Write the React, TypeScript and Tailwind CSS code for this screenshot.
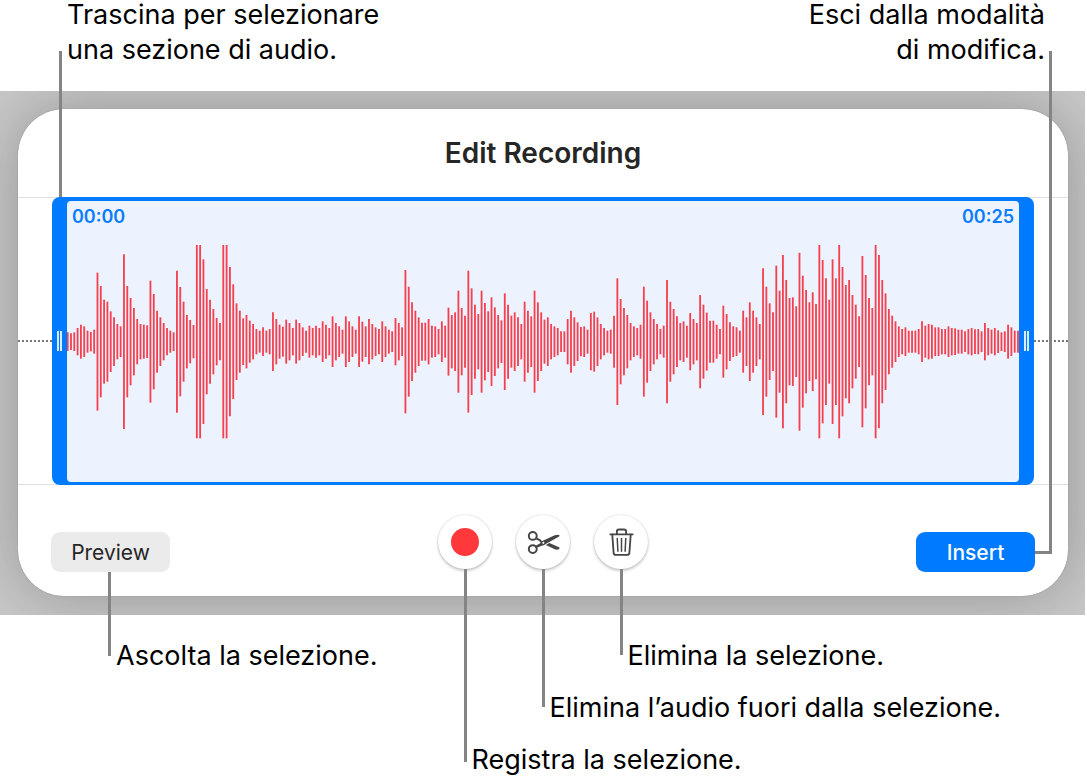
import React from 'react';

const LEVELS: number[] = [
  28, 25, 28, 41, 51, 46, 33, 29, 36, 207, 167, 126, 120, 91, 73, 53, 46, 262, 167, 131,
  101, 68, 53, 51, 49, 183, 143, 93, 73, 56, 41, 33, 28, 213, 164, 120, 80, 65, 50, 290,
  290, 247, 158, 126, 98, 71, 56, 290, 290, 224, 172, 115, 93, 70, 80, 63, 53, 38, 33, 43,
  33, 38, 88, 68, 51, 45, 66, 56, 41, 66, 56, 43, 33, 48, 41, 48, 41, 61, 51, 41,
  76, 56, 46, 36, 76, 61, 46, 36, 76, 60, 46, 68, 53, 43, 38, 61, 46, 36, 31, 71,
  56, 43, 215, 165, 118, 93, 73, 57, 57, 68, 48, 46, 38, 61, 48, 102, 80, 88, 153, 101,
  78, 213, 160, 111, 83, 153, 116, 91, 133, 103, 80, 64, 145, 111, 78, 88, 73, 53, 120, 93,
  76, 153, 118, 88, 66, 73, 53, 46, 41, 31, 31, 68, 93, 73, 58, 44, 46, 36, 86, 90,
  73, 53, 41, 33, 36, 78, 190, 128, 101, 80, 56, 46, 41, 51, 165, 123, 88, 68, 53, 38,
  48, 185, 120, 98, 76, 56, 61, 48, 86, 68, 56, 140, 111, 87, 63, 63, 51, 38, 108, 83,
  58, 46, 43, 33, 93, 73, 118, 93, 73, 53, 220, 165, 115, 88, 228, 153, 260, 185, 131, 133,
  106, 267, 198, 155, 118, 148, 113, 290, 245, 190, 126, 247, 190, 290, 224, 170, 185, 140, 111, 76,
  257, 200, 131, 101, 290, 260, 185, 145, 98, 78, 61, 46, 38, 43, 33, 33, 33, 38, 61, 48,
  53, 51, 43, 43, 38, 38, 46, 41, 40, 36, 36, 31, 38, 41, 37, 38, 31, 56, 41, 36,
  41, 34, 28, 31, 51, 43, 33, 33,
];

const STEP = 9.934;

function Waveform() {
  return (
    <svg
      viewBox="0 0 2856 582"
      preserveAspectRatio="none"
      className="block h-[194px] w-full"
      role="img"
      aria-label="Waveform"
    >
      <g stroke="#f5414f" strokeWidth="5.5">
        {LEVELS.map((level, i) => (
          <line key={i} x1={2 + i * STEP} x2={2 + i * STEP} y1={290 - level} y2={290 + level} />
        ))}
      </g>
    </svg>
  );
}

function Handle({ label }: { label: string }) {
  return (
    <button type="button" aria-label={label} className="flex w-[15px] shrink-0 items-center justify-center gap-px">
      <span className="h-5 w-0.5 bg-white/85" />
      <span className="h-5 w-0.5 bg-white/85" />
    </button>
  );
}

function ScissorsIcon() {
  return (
    <svg viewBox="0 0 100 75" className="h-[25px] w-[33px]" fill="#464646" aria-hidden="true">
      <g fill="none" stroke="#464646" strokeWidth="6" strokeLinecap="round">
        <circle cx="17.5" cy="17.5" r="12" />
        <circle cx="17.5" cy="57.5" r="12" />
        <path d="M28 25 L40 31" />
        <path d="M28 50 L42 42" />
      </g>
      <path
        fillRule="evenodd"
        d="M36 30 L46 33 L84 15.500 Q94 12 99 16 Q99 19 96 20 L58 41 Q53 46 45 47 L31 53 L29 47 L42 40 Z M49.500 35.500 a3 3 0 1 0 .1 0 Z"
      />
      <path d="M57 45 L68 39 L97 52 Q100 54 98 57 Q92 61 84 58 Z" />
    </svg>
  );
}

function TrashIcon() {
  return (
    <svg
      viewBox="0 0 76 84"
      className="h-7 w-[25px]"
      fill="none"
      stroke="#464646"
      strokeWidth="5.5"
      strokeLinecap="round"
      strokeLinejoin="round"
      aria-hidden="true"
    >
      <path d="M4 19 H72" />
      <path d="M24 18 V10 Q24 4 30 4 H46 Q52 4 52 10 V18" />
      <path d="M10 20 L14 75 Q14.500 81 20 81 H56 Q61.500 81 62 75 L66 20" />
      <path d="M25 31 L27 70 M38 31 V70 M51 31 L49 70" strokeWidth="4.500" />
    </svg>
  );
}

function RoundButton({
  label,
  lineClass,
  children,
}: {
  label: string;
  lineClass: string;
  children: React.ReactNode;
}) {
  return (
    <div className="relative">
      <button
        type="button"
        aria-label={label}
        className="flex size-[54px] items-center justify-center rounded-full bg-white shadow-[0_2px_3px_rgba(0,0,0,0.2),0_0_2px_rgba(0,0,0,0.2)]"
      >
        {children}
      </button>
      <span className={`absolute left-[26px] top-full z-10 w-[3px] bg-[#848484] ${lineClass}`} />
    </div>
  );
}

export default function App() {
  return (
    <div className="min-h-screen bg-white pr-0.5 font-['Inter','Liberation_Sans',sans-serif] text-[27px] text-black">
      <div className="flex h-[91px] justify-between pl-[67px] pr-10 leading-[35px]">
        <p className="-mt-[3px]">
          Trascina per selezionare
          <br />
          una sezione di audio.
        </p>
        <p className="-mt-[3px] text-right">
          Esci dalla modalità
          <br />
          di modifica.
        </p>
      </div>

      <div className="bg-[#c8c8c8] pb-[19px] pl-[18px] pr-[17px] pt-[18px]">
        <section className="relative rounded-[46px] bg-white">
          <div className="pointer-events-none absolute -bottom-[19px] -left-[18px] -right-[17px] -top-[18px] overflow-hidden">
            <div className="absolute bottom-[19px] left-[18px] right-[17px] top-[18px] rounded-[46px] shadow-[0_0_64px_rgba(0,0,0,0.26),0_0_1px_rgba(0,0,0,0.4)]" />
          </div>
          <h1 className="flex h-[88px] items-center justify-center text-[28px] font-semibold text-[#262626]">
            Edit Recording
          </h1>

          <div className="flex h-[288px] border-y border-[#e0e0e0]">
            <div className="w-[34px] self-center border-t-2 border-dotted border-[#777]" />
            <div className="relative -my-px flex flex-1 rounded-lg bg-[#007aff]">
              <span className="absolute bottom-full left-[7px] h-[146px] w-[3px] bg-[#848484]" />
              <Handle label="Selection start" />
              <div className="relative mb-[3px] mt-1 flex flex-1 items-center overflow-hidden rounded-[4px] bg-[#ecf3ff]">
                <Waveform />
                <div className="absolute inset-x-[5px] top-1 flex justify-between text-[18px] font-semibold leading-6 text-[#0a7dff]">
                  <span>00:00</span>
                  <span>00:25</span>
                </div>
              </div>
              <Handle label="Selection end" />
            </div>
            <div className="w-[34px] self-center border-t-2 border-dotted border-[#777]" />
          </div>

          <div className="grid h-[111px] grid-cols-[1fr_auto_1fr] items-start px-[33px] pt-[30px] text-[21px]">
            <div className="relative mt-[17px] justify-self-start">
              <button type="button" className="h-10 w-[119px] rounded-[9px] bg-[#ebebeb] pt-0.5 text-[#262626]">
                Preview
              </button>
              <span className="absolute left-[57px] top-full z-10 h-[84px] w-[3px] bg-[#848484]" />
            </div>
            <div className="flex gap-6">
              <RoundButton label="Record" lineClass="h-[193px]">
                <span className="size-7 rounded-full bg-[#ff383c]" />
              </RoundButton>
              <RoundButton label="Trim" lineClass="h-[138px]">
                <ScissorsIcon />
              </RoundButton>
              <RoundButton label="Delete" lineClass="h-[86px]">
                <TrashIcon />
              </RoundButton>
            </div>
            <div className="relative mt-[17px] justify-self-end">
              <button type="button" className="h-10 w-[119px] rounded-[9px] bg-[#007aff] pt-0.5 font-medium text-white">
                Insert
              </button>
              <span className="absolute bottom-[18px] left-full h-[503px] w-[17px] border-b-[3px] border-r-[3px] border-[#848484]" />
            </div>
          </div>
        </section>
      </div>

      <div className="pt-[15px] leading-[52px]">
        <div className="grid grid-cols-2">
          <p className="pl-[116px]">Ascolta la selezione.</p>
          <p className="pl-[85px]">Elimina la selezione.</p>
        </div>
        <p className="pl-[calc(50%+7px)]">Elimina l’audio fuori dalla selezione.</p>
        <p className="pl-[calc(50%-71px)]">Registra la selezione.</p>
      </div>
    </div>
  );
}
